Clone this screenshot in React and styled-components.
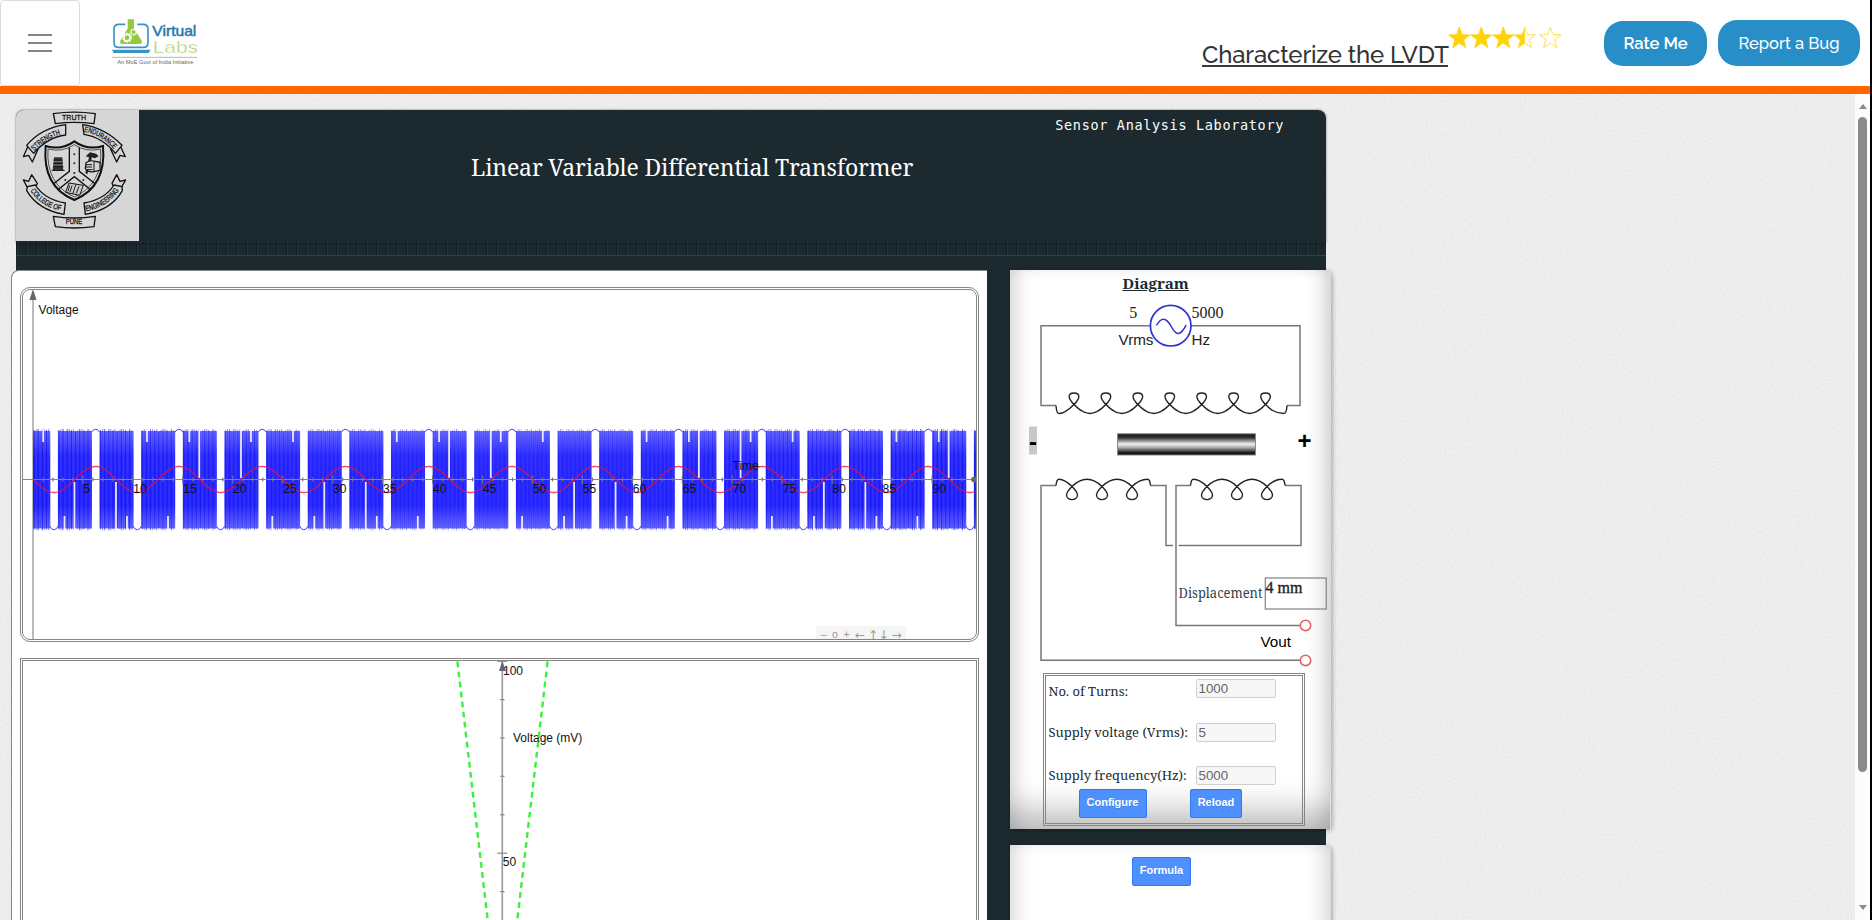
import React from "react";
import styled, { createGlobalStyle } from "styled-components";

const INK = "#1c2a30";
const SERIF = '"Noto Serif", "Droid Serif", "DejaVu Serif Condensed", "DejaVu Serif", serif';
const SANS = '"Liberation Sans", Arial, sans-serif';
const RALEWAY = 'Raleway, Lato, "Open Sans", sans-serif';

const GlobalStyle = createGlobalStyle`
  * { box-sizing: border-box; }
  body { margin: 0; overflow: hidden; background: #fff; font-family: ${SERIF}; }
  h1, h2, h3, p { margin: 0; font-weight: 400; }
  svg { display: block; }
`;

const Page = styled.div`
  display: flex;
  width: 1872px;
  height: 920px;
  overflow: hidden;
`;
const Screen = styled.div`
  display: flex;
  flex-direction: column;
  width: 1870px;
`;
const ScreenEdge = styled.div`
  width: 2px;
  background: #000;
`;

const TopBar = styled.header`
  display: flex;
  align-items: flex-start;
  height: 94px;
  background: #fff;
  border-bottom: 8px solid #ff6600;
`;
const MenuButton = styled.button`
  display: flex;
  flex-direction: column;
  justify-content: center;
  align-items: center;
  gap: 6px;
  width: 80px;
  height: 86px;
  padding: 0;
  border: 1px solid #dcdcdc;
  border-radius: 4px;
  background: #fff;
`;
const MenuLine = styled.span`
  width: 24px;
  height: 2px;
  background: #858585;
`;
const Brand = styled.div`
  margin: 17px 0 0 30px;
`;
const PageTitle = styled.h2`
  margin: 37px 0 0 auto;
  width: 246px;
  height: 30px;
  border-bottom: 2px solid #3a3a3a;
  line-height: 35px;
  font-family: ${RALEWAY};
  font-size: 24px;
  font-weight: 500;
  letter-spacing: -0.15px;
  white-space: nowrap;
  color: #333;
`;
const Stars = styled.div`
  margin: 26px 0 0 0;
  width: 156px;
`;
const PillButton = styled.button`
  height: ${(p) => p.$h}px;
  width: ${(p) => p.$w}px;
  margin: ${(p) => p.$top}px ${(p) => p.$gap}px 0 0;
  padding: 0 0 1px;
  border: 0;
  border-radius: 19px;
  background: #288ec8;
  color: #fff;
  font-family: ${RALEWAY};
  font-size: ${(p) => p.$size}px;
  font-weight: ${(p) => p.$weight};
  white-space: nowrap;
`;

const Main = styled.main`
  display: flex;
  flex: 1;
  position: relative;
  overflow: hidden;
  background: #ececec;
`;
const Texture = styled.svg`
  position: absolute;
  inset: 0;
  width: 100%;
  height: 100%;
`;
const Content = styled.div`
  position: relative;
  flex: 1;
  padding: 16px 0 0 16px;
`;
const ScrollTrack = styled.div`
  position: relative;
  display: flex;
  flex-direction: column;
  align-items: center;
  width: 15px;
  padding: 10px 0 10px;
  background: #fcfcfc;
`;
const Arrow = styled.i`
  border: 4.5px solid transparent;
  border-${(p) => (p.$up ? "bottom" : "top")}: 5px solid #8a8a8a;
  border-${(p) => (p.$up ? "top" : "bottom")}-width: 0;
`;
const Thumb = styled.div`
  width: 9px;
  height: 655px;
  margin: 8px 0 auto;
  border-radius: 5px;
  background: #8b8b8b;
`;

const Lab = styled.div`
  width: 1310px;
  height: 830px;
  border-radius: 8px 8px 0 0;
  background: ${INK};
`;
const Banner = styled.div`
  display: flex;
  height: 133px;
  overflow: hidden;
  border-radius: 8px 8px 0 0;
  box-shadow: 0 0 2px #555;
`;
const BannerText = styled.div`
  flex: 1;
  display: flex;
  flex-direction: column;
  color: #fff;
`;
const LabName = styled.p`
  align-self: flex-end;
  margin: 5px 42px 0 0;
  line-height: 20px;
  font-family: Consolas, "DejaVu Sans Mono", monospace;
  font-size: 13.5px;
  letter-spacing: 0.67px;
`;
const LabTitle = styled.h1`
  margin: 15px 0 0 332px;
  line-height: 34px;
  font-size: 23px;
  letter-spacing: -0.18px;
  white-space: nowrap;
`;
const Ribbon = styled.div`
  height: 13px;
  border-top: 1px solid #151d20;
  border-bottom: 1px solid #343f42;
  background: repeating-linear-gradient(90deg, #19282e 0 8px, #10191d 8px 9px, #26353a 9px 10px) 2px 0;
`;
const Spacer = styled.div`
  height: 14px;
`;
const Columns = styled.div`
  display: flex;
  height: 650px;
`;
const GraphPanel = styled.section`
  flex: none;
  width: 976px;
  margin-left: -5px;
  padding: 16px 8px 0 8px;
  border: 1px solid #85898b;
  border-right: 0;
  border-bottom: 0;
  border-radius: 8px 0 0 0;
  background: #fff;
`;
const GraphFrame = styled.div`
  width: 959px;
  height: ${(p) => p.$h}px;
  margin-bottom: 16px;
  border: 3px double #858585;
  border-radius: ${(p) => p.$r}px;
  overflow: hidden;
`;
const SideColumn = styled.aside`
  flex: none;
  display: flex;
  flex-direction: column;
  gap: 16px;
  width: 321px;
  margin-left: 23px;
`;
const SidePanel = styled.section`
  flex: none;
  height: ${(p) => p.$h}px;
  border-radius: 0 6px 0 0;
  border-right: 1px solid #ddd;
  background: #fff;
  display: flex;
  flex-direction: column;
  box-shadow: 1px 1px 5px rgba(0, 0, 0, 0.35),
    inset 24px 0 22px -20px rgba(0, 0, 0, 0.17),
    inset -24px 0 22px -20px rgba(0, 0, 0, 0.19),
    inset 0 12px 12px -10px rgba(0, 0, 0, 0.06)
    ${(p) => (p.$foot ? ", inset 0 -38px 32px -20px rgba(0, 0, 0, 0.27)" : "")};
`;
const PanelHeading = styled.h3`
  flex: none;
  height: 30px;
  padding-left: 112.5px;
  line-height: 27px;
  font-size: 15.2px;
  font-weight: 700;
  text-decoration: underline;
  color: ${INK};
`;
const Settings = styled.form`
  flex: none;
  width: 262px;
  height: 153px;
  margin-left: 33px;
  border: 3px double #858585;
  padding: 3px 0 0 2.5px;
`;
const Field = styled.label`
  display: flex;
  align-items: flex-start;
  height: ${(p) => p.$h}px;
  font-size: 13px;
  letter-spacing: -0.03px;
  color: ${INK};
`;
const FieldName = styled.span`
  width: 147px;
  line-height: 18px;
  padding-top: ${(p) => p.$drop || 0}px;
  white-space: nowrap;
`;
const FieldInput = styled.input`
  width: 80px;
  height: 19px;
  padding: 0 2px;
  border: 1px solid #d0d0d0;
  border-radius: 2px;
  background: #f7f7f7;
  font-family: ${SANS};
  font-size: 13.33px;
  color: #666;
`;
const Actions = styled.div`
  display: flex;
  gap: 43.5px;
  padding-left: 30px;
`;
const BlueButton = styled.button`
  width: ${(p) => p.$w}px;
  height: 29px;
  padding: 0 0 3px;
  border: 1px solid #3079ed;
  border-radius: 2px;
  background: #4d90fe;
  color: #fff;
  font-family: ${SANS};
  font-size: 11px;
  font-weight: 700;
  text-shadow: 0 1px rgba(0, 0, 0, 0.1);
`;
const FormulaRow = styled.div`
  padding: 12px 0 0 122px;
`;

function VirtualLabsLogo() {
  return (
    <svg width="90" height="50" viewBox="330 51 270 150">
      <path d="M376 73h-20q-14 0-14 14v41q0 14 14 14h74q14 0 14-14V87q0-14-14-14h-18" fill="none" stroke="#3a93c5" strokeWidth="5" />
      <path d="M336 149h116l-6 10H341z" fill="#3a93c5" />
      <path d="M383 58h19v28l22 34q6 12-7 12h-48q-13 0-7-12l21-34z" fill="#95c93d" />
      <circle cx="381" cy="113" r="12" fill="none" stroke="#fff" strokeWidth="6" strokeDasharray="5 2.5" />
      <circle cx="381" cy="113" r="9" fill="none" stroke="#fff" strokeWidth="4" />
      <circle cx="401" cy="96" r="8" fill="none" stroke="#fff" strokeWidth="5" strokeDasharray="4 1.5" />
      <text x="457" y="107" fontFamily={SANS} fontSize="43" fill="#2878ab" stroke="#2878ab" strokeWidth="1.5" textLength="132" lengthAdjust="spacingAndGlyphs">Virtual</text>
      <text x="458" y="158" fontFamily={SANS} fontSize="48" fill="#a6cf5c" stroke="#fff" strokeWidth="1.2" textLength="136" lengthAdjust="spacingAndGlyphs">Labs</text>
      <path d="M336 172h256" stroke="#aaa" strokeWidth="2.5" />
      <text x="352" y="193" fontFamily={SANS} fontSize="17" fill="#666" textLength="228" lengthAdjust="spacingAndGlyphs">An MoE Govt of India Initiative</text>
    </svg>
  );
}

const STAR = "M11 0.5L13.7 8.2L21.6 8.4L15.4 13.3L17.6 21.2L11 16.6L4.4 21.2L6.6 13.3L0.4 8.4L8.3 8.2Z";
function Rating() {
  const xs = [0.3, 22.3, 44.3, 65.8, 91.3];
  return (
    <svg width="116" height="24" viewBox="0 0 116 24">
      <defs>
        <clipPath id="half"><rect x="0" y="0" width="11" height="24" /></clipPath>
      </defs>
      {xs.map((x, i) => (
        <g key={x} transform={`translate(${x} 0.5)`}>
          {i < 3 && <path d={STAR} fill="#ffd306" stroke="#ffd306" strokeWidth="0.8" />}
          {i === 3 && <path d={STAR} fill="#ffd306" clipPath="url(#half)" />}
          {i > 2 && <path d={STAR} fill="none" stroke="#ffdf4a" strokeWidth="1" />}
        </g>
      ))}
    </svg>
  );
}

function Crest() {
  const band = { fill: "#d6d6d6", stroke: "#111", strokeWidth: 4, strokeLinejoin: "round" };
  const word = { fontFamily: "Liberation Sans", fontSize: 23, fill: "#111", stroke: "#111", strokeWidth: 0.8 };
  const fit = "spacingAndGlyphs";
  return (
    <svg width="123" height="131" viewBox="48 330 369 393">
      <rect x="48" y="330" width="369" height="393" fill="#d6d6d6" />
      <defs>
        <path id="arcStrength" d="M103 453Q138 413 190 401" />
        <path id="arcEndurance" d="M252 395Q302 403 345 451" />
        <path id="arcCollege" d="M91 572Q126 624 190 633" />
        <path id="arcEngineering" d="M258 634Q322 622 361 566" />
      </defs>
      <path {...band} d="M88 430L70 470L86 466L97 486L114 448Z" />
      <path {...band} d="M357 430L376 470L360 466L350 486L332 448Z" />
      <path {...band} d="M82 562L70 540L86 544L95 524L112 550L100 572Z" />
      <path {...band} d="M364 562L377 540L360 544L350 524L336 550L346 572Z" />
      <path {...band} d="M80 436Q124 384 197 374V405Q142 412 101 460Z" />
      <path {...band} d="M248 374Q316 384 366 436L346 460Q308 412 252 403Z" />
      <path {...band} d="M82 560L106 555Q134 599 196 609L192 643Q114 630 80 572Z" />
      <path {...band} d="M366 560L342 555Q314 599 252 609L256 643Q334 630 367 572Z" />
      <path {...band} d="M160 341Q222 332 286 341L282 371Q222 363 166 371Z" />
      <path {...band} d="M160 649Q222 659 286 649L282 680Q222 688 166 680Z" />
      <text {...word} x="186" y="361" textLength="72" lengthAdjust={fit}>TRUTH</text>
      <text {...word} x="197" y="673" textLength="50" lengthAdjust={fit}>PUNE</text>
      <text {...word}><textPath href="#arcStrength" textLength="94" lengthAdjust={fit}>STRENGTH</textPath></text>
      <text {...word}><textPath href="#arcEndurance" textLength="106" lengthAdjust={fit}>ENDURANCE</textPath></text>
      <text {...word}><textPath href="#arcCollege" textLength="112" lengthAdjust={fit}>COLLEGE OF</textPath></text>
      <text {...word}><textPath href="#arcEngineering" textLength="120" lengthAdjust={fit}>ENGINEERING</textPath></text>
      <path d="M223 424Q184 452 137 438Q126 560 223 600Q320 560 309 438Q262 452 223 424Z" fill="#d6d6d6" stroke="#111" strokeWidth="6" />
      <path d="M223 434Q187 458 144 447Q137 552 223 591Q309 552 302 447Q259 458 223 434Z" fill="none" stroke="#333" strokeWidth="2.5" />
      <path d="M208 442V514L160 552M238 442V514L286 552M173 570L223 530L273 570" fill="none" stroke="#111" strokeWidth="4" />
      {[[223, 463], [223, 490], [223, 519], [196, 540], [250, 540]].map(([x, y]) => (
        <circle key={`${x}-${y}`} cx={x} cy={y} r="3" fill="#222" />
      ))}
      <path d="M162 472H187L190 512H158Z" fill="#333" />
      <path d="M155 511H194M161 480H187M160 490H188M159 500H190" stroke="#111" strokeWidth="3" />
      <path d="M161 485H186M160 495H188" stroke="#ccc" strokeWidth="1.5" />
      <path d="M257 469L270 457L288 461L296 469L284 475L276 472L262 523L256 519L267 472Z" fill="#222" />
      <path d="M258 488Q270 479 286 484L300 487V511L282 515Q264 518 256 506Z" fill="#d6d6d6" stroke="#111" strokeWidth="3.5" />
      <path d="M258 494H276M257 501H276M260 509H278M282 485V514" stroke="#111" strokeWidth="3" />
      <path d="M207 549L250 556L239 586L197 577Z" fill="#ccc" stroke="#111" strokeWidth="3" />
      <path d="M228 553L218 582M209 556L204 574M216 557L210 576M237 559L229 580" stroke="#222" strokeWidth="3" />
    </svg>
  );
}

/* Supply waveform: dense strokes between the crests and troughs of the output wave. */
const PERIOD = 83.27;
const FIRST_TROUGH = 54;
const NOTCHES = [
  [116, 482, 531], [127, 516, 531],
  [147, 428, 442], [168, 516, 531],
  [189.3, 428, 442], [199.3, 428, 478],
  [241, 428, 478], [251, 428, 442],
  [272.3, 516, 531], [293, 428, 442],
  [314.3, 516, 531], [324.3, 482, 531],
];
const blocks = [];
const caps = [];
for (let k = -1; k < 24; k += 1) {
  const c = FIRST_TROUGH + (k * PERIOD) / 2;
  const start = Math.max(33, c + 3.9);
  const end = Math.min(976, c + PERIOD / 2 - 3.7);
  if (end > start) blocks.push([start, end]);
  if (k >= 0 && c < 975) caps.push([c, k % 2 === 0]);
}
const notches = [];
for (let s = -1; s < 4; s += 1) {
  NOTCHES.forEach(([x, a, b]) => {
    const nx = x + s * 249.8;
    if (nx > 36 && nx < 974) notches.push([nx, a, b]);
  });
}
const strokes = [];
blocks.forEach(([a, b]) => {
  for (let x = a + 1, i = 0; x < b; x += 2.08, i += 1) {
    const fade = Math.min(1, Math.abs(x - 500) / 470);
    strokes.push({ x, dark: i % 2 === 0, fade, inset: i % 5 === 3 ? 2.5 : i % 3 === 0 ? 1 : 0 });
  }
});
const outputWave = (() => {
  let d = "";
  for (let x = 33; x <= 976; x += 1) {
    const y = 479.5 + 13 * Math.cos(((x - FIRST_TROUGH) * 2 * Math.PI) / PERIOD);
    d += `${d ? "L" : "M"}${x} ${y.toFixed(2)}`;
  }
  return d;
})();

function TimeGraph() {
  const label = { fontFamily: "Liberation Sans", fontSize: 12, fill: "#111" };
  const ticks = Array.from({ length: 94 }, (_, i) => i + 1);
  return (
    <svg width="953" height="349" viewBox="23 290 953 349">
      <defs>
        <linearGradient id="density" x1="0" y1="429" x2="0" y2="530" gradientUnits="userSpaceOnUse">
          <stop offset="0" stopColor="#6a6aff" />
          <stop offset="0.14" stopColor="#4646ff" />
          <stop offset="0.26" stopColor="#2222ff" />
          <stop offset="0.5" stopColor="#1c1cff" />
          <stop offset="0.76" stopColor="#1c1cff" />
          <stop offset="0.88" stopColor="#4646ff" />
          <stop offset="1" stopColor="#6a6aff" />
        </linearGradient>
      </defs>
      <path d="M33 639V292" stroke="#aaa" strokeWidth="1.6" />
      <path d="M33 289L36.5 300H29.5Z" fill="#666" />
      {blocks.map(([a, b]) => (
        <rect key={a} x={a} y="431" width={b - a} height="97.5" fill="url(#density)" opacity="0.95" />
      ))}
      {strokes.map((s) => (
        <path
          key={s.x}
          d={`M${s.x.toFixed(2)} ${429 + s.inset}V${530.3 - s.inset}`}
          stroke={s.dark ? "#1010e8" : "#3c3cff"}
          strokeWidth="1.1"
          opacity={s.dark ? 0.18 + 0.5 * s.fade : 0.5}
        />
      ))}
      {notches.map(([x, a, b]) => (
        <rect key={`${x}-${a}`} x={x - 0.9} y={a} width="1.8" height={b - a} fill="#fff" opacity="0.88" />
      ))}
      {caps.map(([x, low]) => (
        <path
          key={x}
          d={low ? `M${x - 4.2} 526Q${x - 2.5} 529.8 ${x} 529.8T${x + 4.2} 526` : `M${x - 4.2} 432.5Q${x - 2.5} 429.2 ${x} 429.2T${x + 4.2} 432.5`}
          fill="none"
          stroke="#4a4ae8"
          strokeWidth="1"
        />
      ))}
      <path d="M23 479.5H976" stroke="#888" strokeWidth="1.2" />
      {ticks.map((n) => {
        const h = n % 5 === 0 ? 4 : 2;
        const x = 33 + n * 9.99;
        return <path key={n} d={`M${x} ${479.5 - h}V${479.5 + h}`} stroke="#777" strokeWidth="1.2" />;
      })}
      <circle cx="974.5" cy="479.5" r="3" fill="#666" />
      <path d={outputWave} fill="none" stroke="#f01030" strokeWidth="1.4" opacity="0.75" />
      {Array.from({ length: 18 }, (_, i) => (i + 1) * 5).map((n) => (
        <text key={n} {...label} x={33.4 + n * 9.99} y="492.6">{n}</text>
      ))}
      <text {...label} x="38.6" y="314">Voltage</text>
      <text {...label} x="732.5" y="469.6">Time</text>
      <rect x="816" y="626" width="90" height="14" fill="#f5f5f5" />
      {[["–", 824], ["o", 835], ["+", 846.5]].map(([g, x]) => (
        <text key={g} x={x} y="638" textAnchor="middle" fontFamily="Liberation Sans" fontSize="10.5" fill="#999">{g}</text>
      ))}
      {[["←", 860], ["↑", 873], ["↓", 883.5], ["→", 896.5]].map(([g, x]) => (
        <text key={g} x={x} y="638.5" textAnchor="middle" fontFamily="DejaVu Sans" fontSize="12" fill="#999">{g}</text>
      ))}
    </svg>
  );
}

function VoltageGraph() {
  const label = { fontFamily: "Liberation Sans", fontSize: 12, fill: "#111" };
  return (
    <svg width="953" height="270" viewBox="23 661 953 270">
      <path d="M502.3 661V931" stroke="#999" strokeWidth="1.6" />
      <path d="M502.3 661L506 671H499Z" fill="#666" />
      {[661.3, 699.6, 738, 776.3, 814.8, 853.2, 891.6].map((y, i) => {
        const w = i % 5 === 0 ? 5 : 2.2;
        return <path key={y} d={`M${502.3 - w} ${y}H${502.3 + w}`} stroke="#888" strokeWidth="1.2" />;
      })}
      <text {...label} x="503" y="674.6">100</text>
      <text {...label} x="502.8" y="866.4">50</text>
      <text {...label} x="513" y="741.6">Voltage (mV)</text>
      <path d="M457.4 661.5L489 931" stroke="#3df03d" strokeWidth="2.4" strokeDasharray="5.8 4.3" />
      <path d="M547.6 661.5L516 931" stroke="#3df03d" strokeWidth="2.4" strokeDasharray="5.8 4.3" />
    </svg>
  );
}

/* Primary winding loops rise above the wire, secondary loops hang below it. */
function coil({ x0, x1, y, loops, pitch, first, up }) {
  const s = up ? 1 : -1;
  const edge = y + (up ? 8 : 6.3) * s;
  const w = up ? 4.8 : 5.5;
  const reach = up ? 9 : 9.6;
  const tip = up ? 13.7 : 15.6;
  let d = `M${x0} ${y}Q${x0 + 0.5} ${edge} ${x0 + 3} ${edge}`;
  for (let i = 0; i < loops; i += 1) {
    const c = first + i * pitch;
    const nextX = i === loops - 1 ? x1 - 3 : c + pitch / 2;
    d += `C${c - 9} ${edge} ${c - 4} ${y + 3 * s} ${c} ${y - s}`;
    d += `C${c + 3} ${y - 4 * s} ${c + w} ${y - (reach - 3) * s} ${c + w} ${y - reach * s}`;
    d += `C${c + w} ${y - tip * s} ${c - w} ${y - tip * s} ${c - w} ${y - reach * s}`;
    d += `C${c - w} ${y - (reach - 3) * s} ${c - 3} ${y - 4 * s} ${c} ${y - s}`;
    d += `C${c + 4} ${y + 3 * s} ${c + 9} ${edge} ${nextX} ${edge}`;
  }
  return `${d}Q${x1 - 0.5} ${edge} ${x1} ${y}`;
}

function TransformerDiagram() {
  const wire = { fill: "none", stroke: "#777", strokeWidth: 1.5 };
  const winding = { fill: "none", stroke: "#222", strokeWidth: 1.4 };
  const sans = { fontFamily: "Liberation Sans", fontSize: 15.2, fill: "#222" };
  const times = { fontFamily: "Liberation Serif", fontSize: 16, fill: "#222" };
  return (
    <svg width="320" height="373" viewBox="1010 300 320 373">
      <defs>
        <linearGradient id="core" x1="0" y1="0" x2="0" y2="1">
          <stop offset="0" stopColor="#111" />
          <stop offset="0.18" stopColor="#333" />
          <stop offset="0.48" stopColor="#f0f0f0" />
          <stop offset="0.62" stopColor="#bbb" />
          <stop offset="0.88" stopColor="#222" />
          <stop offset="1" stopColor="#000" />
        </linearGradient>
      </defs>
      <path {...wire} d="M1150 325.7H1041V405.5H1056M1191 325.7H1300V405.5H1287" />
      <path {...winding} d={coil({ x0: 1056, x1: 1287, y: 405.5, loops: 7, pitch: 31.92, first: 1074, up: true })} />
      <circle cx="1170.7" cy="325.7" r="20.3" fill="none" stroke="#3131cf" strokeWidth="1.7" />
      <path d="M1156.5 325.5C1161 317 1166 317 1171 326C1175 334 1179 336 1183 330Q1185 328 1186 325" fill="none" stroke="#3131cf" strokeWidth="1.5" />
      <text {...times} x="1129.3" y="318">5</text>
      <text {...times} x="1191.5" y="318">5000</text>
      <text {...sans} x="1118.6" y="345">Vrms</text>
      <text {...sans} x="1191.5" y="345">Hz</text>
      <rect x="1029" y="426.5" width="8" height="28" fill="#c8c8c8" />
      <text x="1029" y="449.5" fontFamily="Liberation Sans" fontWeight="700" fontSize="24" fill="#000">-</text>
      <text x="1297.6" y="448.5" fontFamily="Liberation Sans" fontWeight="700" fontSize="24" fill="#000">+</text>
      <rect x="1117.5" y="433.8" width="138" height="21.2" fill="url(#core)" stroke="#888" strokeWidth="1" />
      <path {...wire} d="M1056 485.5H1041V660.2H1300M1150.5 485.5H1166V545.5H1173M1190.5 485.5H1176V625.4H1300M1178.5 545.5H1301V485.5H1285" />
      <path {...winding} d={coil({ x0: 1056, x1: 1150.5, y: 485.5, loops: 3, pitch: 30, first: 1072, up: false })} />
      <path {...winding} d={coil({ x0: 1190.5, x1: 1285, y: 485.5, loops: 3, pitch: 30, first: 1207, up: false })} />
      <circle cx="1305.5" cy="625.4" r="5.2" fill="#fff" stroke="#e86060" strokeWidth="1.6" />
      <circle cx="1305.5" cy="660.4" r="5.2" fill="#fff" stroke="#e86060" strokeWidth="1.6" />
      <text {...sans} x="1260.5" y="646.5" fill="#000">Vout</text>
      <text x="1178.5" y="597.5" fontFamily={SERIF} fontSize="13.5" fill="#34434a" textLength="84" lengthAdjust="spacingAndGlyphs">Displacement</text>
      <rect x="1265.3" y="578" width="61" height="31" fill="none" stroke="#8a8a8a" strokeWidth="1.3" />
      <text {...times} x="1265.5" y="593" stroke="#222" strokeWidth="0.35">4 mm</text>
    </svg>
  );
}

export default function App() {
  return (
    <Page>
      <GlobalStyle />
      <Screen>
        <TopBar>
          <MenuButton aria-label="Menu">
            <MenuLine />
            <MenuLine />
            <MenuLine />
          </MenuButton>
          <Brand><VirtualLabsLogo /></Brand>
          <PageTitle>Characterize the LVDT</PageTitle>
          <Stars><Rating /></Stars>
          <PillButton $w={103} $h={45} $top={21} $gap={11} $size={16.6} $weight={600}>Rate Me</PillButton>
          <PillButton $w={142} $h={46} $top={20} $gap={10} $size={16.5} $weight={500}>Report a Bug</PillButton>
        </TopBar>
        <Main>
          <Texture>
            <filter id="paper" x="0" y="0" width="100%" height="100%">
              <feTurbulence type="fractalNoise" baseFrequency="0.55" numOctaves="3" seed="4" />
              <feColorMatrix values="0 0 0 0 0.5  0 0 0 0 0.5  0 0 0 0 0.5  0.35 0 0 0 -0.13" />
            </filter>
            <rect width="100%" height="100%" fill="#efefef" />
            <rect width="100%" height="100%" filter="url(#paper)" />
          </Texture>
          <Content>
            <Lab>
              <Banner>
                <Crest />
                <BannerText>
                  <LabName>Sensor Analysis Laboratory</LabName>
                  <LabTitle>Linear Variable Differential Transformer</LabTitle>
                </BannerText>
              </Banner>
              <Ribbon />
              <Spacer />
              <Columns>
                <GraphPanel>
                  <GraphFrame $h={355} $r={10}><TimeGraph /></GraphFrame>
                  <GraphFrame $h={276} $r={0}><VoltageGraph /></GraphFrame>
                </GraphPanel>
                <SideColumn>
                  <SidePanel $h={559} $foot>
                    <PanelHeading>Diagram</PanelHeading>
                    <TransformerDiagram />
                    <Settings>
                      <Field $h={44}>
                        <FieldName $drop={3}>No. of Turns:</FieldName>
                        <FieldInput defaultValue="1000" />
                      </Field>
                      <Field $h={43}>
                        <FieldName>Supply voltage (Vrms):</FieldName>
                        <FieldInput defaultValue="5" />
                      </Field>
                      <Field $h={23}>
                        <FieldName>Supply frequency(Hz):</FieldName>
                        <FieldInput defaultValue="5000" />
                      </Field>
                      <Actions>
                        <BlueButton type="button" $w={68}>Configure</BlueButton>
                        <BlueButton type="button" $w={52}>Reload</BlueButton>
                      </Actions>
                    </Settings>
                  </SidePanel>
                  <SidePanel $h={120}>
                    <FormulaRow><BlueButton $w={59}>Formula</BlueButton></FormulaRow>
                  </SidePanel>
                </SideColumn>
              </Columns>
            </Lab>
          </Content>
          <ScrollTrack>
            <Arrow $up />
            <Thumb />
            <Arrow />
          </ScrollTrack>
        </Main>
      </Screen>
      <ScreenEdge />
    </Page>
  );
}
